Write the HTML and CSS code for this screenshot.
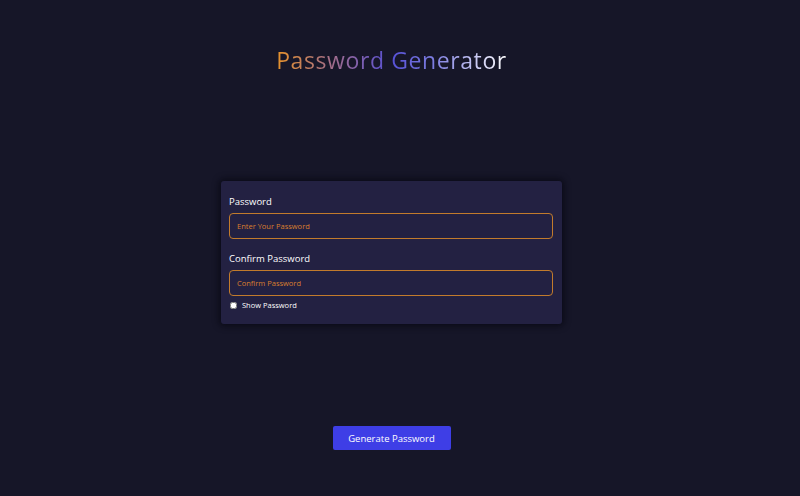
FILE: index.html
```html
<!DOCTYPE html>
<html lang="en">
<head>
<meta charset="utf-8">
<title>Password Generator</title>
<link rel="stylesheet" href="styles.css">
</head>
<body>
<main class="page">
  <h1 class="title">Password Generator</h1>
  <form class="card">
    <label class="label" for="pw">Password</label>
    <input class="field" id="pw" type="password" placeholder="Enter Your Password">
    <label class="label label-second" for="cpw">Confirm Password</label>
    <input class="field" id="cpw" type="password" placeholder="Confirm Password">
    <label class="show">
      <input type="checkbox" class="check">
      <span>Show Password</span>
    </label>
  </form>
  <button class="generate" type="button">Generate Password</button>
</main>
</body>
</html>
```
FILE: styles.css
```css
* { box-sizing: border-box; }
html, body {
  margin: 0;
  padding: 0;
  height: 100%;
  background: #161628;
}
body {
  font-family: "Open Sans", "Liberation Sans", sans-serif;
  color: #ffffff;
}
.page {
  width: 783px;
  height: 496px;
  display: flex;
  flex-direction: column;
  align-items: center;
}
.title {
  margin: 44px 0 0;
  font-size: 23px;
  font-weight: 500;
  line-height: 32px;
  letter-spacing: 0.6px;
  background: linear-gradient(90deg, #e6922a 0%, #a06c8e 25%, #5650d6 50%, #7c7ce0 68%, #ffffff 100%);
  -webkit-background-clip: text;
  background-clip: text;
  color: transparent;
}
.card {
  margin-top: 105px;
  width: 341px;
  background: #232142;
  border-radius: 3px;
  box-shadow: 0 0 6px 2px rgba(5, 5, 15, 0.7);
  padding: 14px 8px 14px 8px;
  display: flex;
  flex-direction: column;
}
.label {
  font-size: 9.5px;
  font-weight: 500;
  line-height: 14px;
  color: #ffffff;
  margin-bottom: 4px;
}
.label-second {
  margin-top: 13px;
}
.field {
  width: 324px;
  height: 26px;
  background: #232142;
  border: 1px solid #c27b2c;
  border-radius: 4px;
  padding: 0 7px;
  font-family: inherit;
  font-size: 7.5px;
  color: #e08530;
  outline: none;
}
.field::placeholder {
  color: #d97f2f;
}
.show {
  display: flex;
  align-items: center;
  gap: 5px;
  margin-top: 4px;
  font-size: 7.5px;
  color: #ffffff;
}
.check {
  margin: 0 0 0 1px;
  width: 7px;
  height: 7px;
}
.generate {
  margin-top: 102px;
  width: 118px;
  height: 24px;
  border: none;
  border-radius: 2px;
  background: #3e3ee6;
  color: #ffffff;
  font-family: inherit;
  font-size: 9.5px;
  font-weight: 500;
}
```
